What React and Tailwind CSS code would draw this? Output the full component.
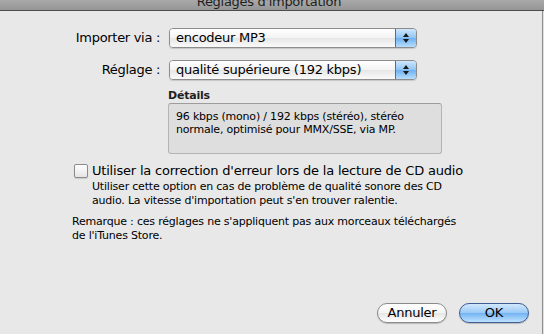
const FONT = { fontFamily: '"DejaVu Sans", "Liberation Sans", sans-serif' };

const PopUp = ({ value }) => (
  <div className="flex h-[20px] w-[248px] overflow-hidden rounded-[4px] border border-[#8c8c8c] shadow-[0_1px_1px_rgba(0,0,0,0.15)]">
    <div className="flex flex-1 items-center bg-[linear-gradient(#ffffff,#f3f3f3_50%,#e6e6e6_51%,#fafafa)] pl-[6px] text-[13px] tracking-[-0.25px] text-black">
      {value}
    </div>
    <div className="flex w-[21px] flex-col items-center justify-center gap-[2px] border-l border-[#4a6fa8] bg-[linear-gradient(#cfe6fc,#8fc4f5_50%,#6db0f1_51%,#b8defd)]">
      <span className="h-0 w-0 border-x-[3px] border-b-[4px] border-x-transparent border-b-[#1a1a1a]" />
      <span className="h-0 w-0 border-x-[3px] border-t-[4px] border-x-transparent border-t-[#1a1a1a]" />
    </div>
  </div>
);

const Row = ({ label, value }) => (
  <div className="flex items-center">
    <div className="w-[161px] pr-[1px] text-right text-[13px] tracking-[-0.3px] text-black">{label}</div>
    <div className="ml-[8px]">
      <PopUp value={value} />
    </div>
  </div>
);

export default function App() {
  return (
    <div className="flex h-[334px] w-[544px] flex-col overflow-hidden bg-[#e8e8e8]" style={FONT}>
      <div className="relative h-[11px] overflow-hidden border-b border-[#4d4d4d] bg-[linear-gradient(#a9a9a9,#959595)]">
        <div className="absolute left-0 right-[6px] top-[-8px] text-center text-[13px] tracking-[-0.3px] text-[#1e1e1e]">
          Réglages d'importation
        </div>
      </div>

      <div className="flex flex-1">
        <div className="flex w-[542px] flex-col">
          <div className="mt-[17px] flex flex-col gap-[12px]">
            <Row label="Importer via :" value="encodeur MP3" />
            <Row label="Réglage :" value="qualité supérieure (192 kbps)" />
          </div>

          <div className="ml-[168px] mt-[9px] text-[11px] font-bold leading-[13px] tracking-[-0.2px] text-[#1e1e1e]">
            Détails
          </div>
          <div className="ml-[168px] mt-[1px] h-[51px] w-[274px] rounded-[3px] border border-[#b4b4b4] border-t-[#9c9c9c] bg-[#dedede] px-[7px] pt-[6px] text-[11px] leading-[13px] tracking-[-0.2px] text-black">
            96 kbps (mono) / 192 kbps (stéréo), stéréo
            <br />
            normale, optimisé pour MMX/SSE, via MP.
          </div>

          <label className="ml-[74px] mt-[7px] flex items-center gap-[4px]">
            <span className="h-[14px] w-[14px] rounded-[2px] border border-[#8a8a8a] bg-[linear-gradient(#ffffff,#f2f2f2_50%,#e4e4e4)] shadow-[0_1px_1px_rgba(0,0,0,0.12)]" />
            <span className="text-[13px] tracking-[-0.2px] text-black">
              Utiliser la correction d'erreur lors de la lecture de CD audio
            </span>
          </label>
          <div className="ml-[92px] mt-[-1px] text-[11px] leading-[14px] tracking-[-0.2px] text-black">
            Utiliser cette option en cas de problème de qualité sonore des CD
            <br />
            audio. La vitesse d'importation peut s'en trouver ralentie.
          </div>
          <div className="ml-[72px] mt-[7px] text-[11px] leading-[14px] tracking-[-0.2px] text-black">
            Remarque : ces réglages ne s'appliquent pas aux morceaux téléchargés
            <br />
            de l'iTunes Store.
          </div>

          <div className="mb-[11px] mr-[13px] mt-auto flex justify-end gap-[12px]">
            <button
              type="button"
              className="h-[20px] w-[70px] rounded-full border border-[#8a8a8a] bg-[linear-gradient(#ffffff,#f4f4f4_50%,#e6e6e6_51%,#ffffff)] text-[13px] leading-[18px] tracking-[-0.25px] text-black shadow-[0_1px_1px_rgba(0,0,0,0.2)]"
            >
              Annuler
            </button>
            <button
              type="button"
              className="h-[20px] w-[70px] rounded-full border border-[#3d5d94] bg-[linear-gradient(#d2e8fd,#98c9f6_50%,#72b3f2_51%,#bfe2ff)] text-[13px] leading-[18px] tracking-[-0.25px] text-black shadow-[0_1px_1px_rgba(0,0,0,0.2)]"
            >
              OK
            </button>
          </div>
        </div>
        <div className="w-[1px] bg-[#8e8e8e]" />
        <div className="w-[1px] bg-[#e0e0e0]" />
      </div>
    </div>
  );
}
